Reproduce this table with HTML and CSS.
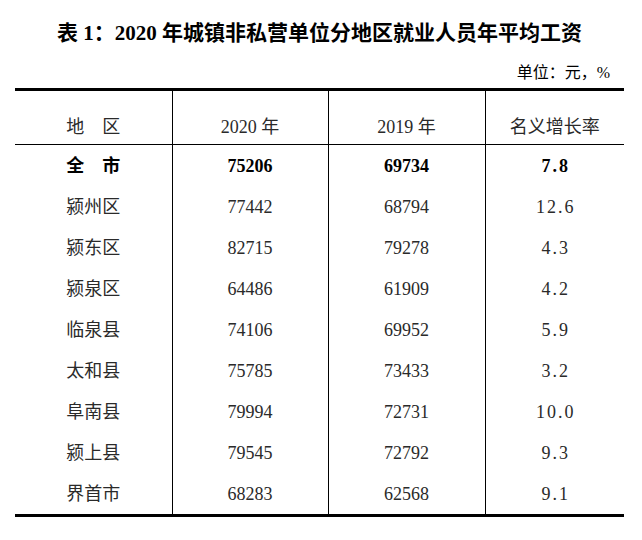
FILE: index.html
```html
<!DOCTYPE html>
<html lang="zh-CN">
<head>
<meta charset="utf-8">
<title>表 1：2020 年城镇非私营单位分地区就业人员年平均工资</title>
<link rel="stylesheet" href="styles.css">
</head>
<body>
<div class="page">
  <h1 class="title">表 1：2020 年城镇非私营单位分地区就业人员年平均工资</h1>
  <div class="unit">单位：元，%</div>
  <table class="data">
    <colgroup>
      <col class="c1"><col class="c2"><col class="c3"><col class="c4">
    </colgroup>
    <thead>
      <tr>
        <th>地　区</th>
        <th>2020 年</th>
        <th>2019 年</th>
        <th>名义增长率</th>
      </tr>
    </thead>
    <tbody>
      <tr class="total">
        <td>全　市</td><td>75206</td><td>69734</td><td class="rate">7.8</td>
      </tr>
      <tr><td>颍州区</td><td>77442</td><td>68794</td><td class="rate">12.6</td></tr>
      <tr><td>颍东区</td><td>82715</td><td>79278</td><td class="rate">4.3</td></tr>
      <tr><td>颍泉区</td><td>64486</td><td>61909</td><td class="rate">4.2</td></tr>
      <tr><td>临泉县</td><td>74106</td><td>69952</td><td class="rate">5.9</td></tr>
      <tr><td>太和县</td><td>75785</td><td>73433</td><td class="rate">3.2</td></tr>
      <tr><td>阜南县</td><td>79994</td><td>72731</td><td class="rate">10.0</td></tr>
      <tr><td>颍上县</td><td>79545</td><td>72792</td><td class="rate">9.3</td></tr>
      <tr><td>界首市</td><td>68283</td><td>62568</td><td class="rate">9.1</td></tr>
    </tbody>
  </table>
</div>
</body>
</html>
```
FILE: styles.css
```css
html, body {
  margin: 0;
  padding: 0;
  background: #ffffff;
}

.page {
  width: 609px;
  padding: 0 0 0 15px;
  font-family: "Liberation Serif", "Noto Sans CJK SC", serif;
  color: #2a2a2a;
}

.title {
  margin: 18px 0 0 0;
  font-size: 21px;
  line-height: 30px;
  font-weight: 700;
  text-align: center;
  color: #000;
}

.unit {
  margin-top: 15px;
  padding-right: 14px;
  font-size: 16px;
  line-height: 20px;
  text-align: right;
  color: #000;
}

.data {
  margin-top: 5px;
  width: 609px;
  border-collapse: collapse;
  table-layout: fixed;
  border-top: 3px solid #000;
  border-bottom: 3px solid #000;
  font-size: 18px;
}

.c1 { width: 157px; }
.c2 { width: 156px; }
.c3 { width: 157px; }
.c4 { width: 139px; }

.data th,
.data td {
  padding: 0;
  text-align: center;
  border-left: 1px solid #000;
  line-height: 20px;
}

.data th:first-child,
.data td:first-child {
  border-left: none;
}

.data th {
  height: 46px;
  padding-bottom: 7px;
  vertical-align: bottom;
  font-weight: 400;
  border-bottom: 1px solid #000;
}

.data td {
  height: 41px;
  vertical-align: middle;
}

.data .rate {
  letter-spacing: 2px;
  text-indent: 2px;
}

.data .total td {
  font-weight: 700;
  color: #000;
}
```
